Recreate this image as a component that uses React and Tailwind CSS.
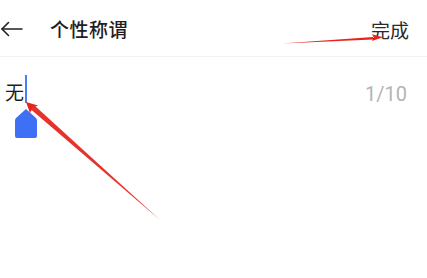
import React from 'react';

const BackArrow = () => (
  <svg width="24" height="16" viewBox="0 0 24 16" fill="none" stroke="#222" strokeWidth="1.6" strokeLinecap="round" strokeLinejoin="round">
    <path d="M22 8H2" />
    <path d="M8.5 1.5L2 8l6.5 6.5" />
  </svg>
);

const Annotations = () => (
  <svg className="absolute inset-0 pointer-events-none" width="427" height="278" viewBox="0 0 427 278">
    {/* arrow pointing at 完成 */}
    <polygon points="282,43.4 373,37 373,39.6" fill="#e8231d" />
    <polygon points="383,37.3 372,34.2 374,38 372,41" fill="#e8231d" />
    {/* arrow pointing at cursor */}
    <polygon points="160,220 34.5,105.5 31,109.5" fill="#e62620" opacity="0.95" />
    <polygon points="26,102 30,113 33,107.5 38,105.5" fill="#e8231d" />
  </svg>
);

export default function App() {
  return (
    <div
      className="relative w-[427px] h-[278px] bg-white overflow-hidden"
      style={{ fontFamily: '"Noto Sans CJK SC", "Noto Sans", Roboto, sans-serif' }}
    >
      <div className="flex items-center h-[57px] border-b border-[#f3f3f3]">
        <div className="w-[50px] flex items-center pl-[0px] pt-[1px]">
          <BackArrow />
        </div>
        <div className="text-[19px] font-medium text-[#1e1e1e] leading-none tracking-[0.5px]">个性称谓</div>
        <div className="ml-auto pr-[18px] pt-[3px] text-[19px] text-[#2a2a2a] leading-none">完成</div>
      </div>

      <div className="flex items-start justify-between pl-[5px] pr-[20px] pt-[18px]">
        <div className="relative flex items-start">
          <span className="text-[19px] text-[#1e1e1e] leading-none mt-[7px]">无</span>
          <span className="w-[2px] h-[28px] bg-[#4a7cf6] ml-[1px]" />
          <div className="absolute left-[9px] top-[33px]">
            <svg width="24" height="31" viewBox="0 0 24 31">
              <path d="M12 1 L22 10 Q23 11 23 13 V28 Q23 30 21 30 H3 Q1 30 1 28 V13 Q1 11 2 10 Z" fill="#3e6ff5" />
            </svg>
          </div>
        </div>
        <span
          className="text-[20px] text-[#b4b4b4] leading-none mt-[9px]"
          style={{ fontFamily: 'Roboto, "Noto Sans", sans-serif' }}
        >
          1/10
        </span>
      </div>

      <Annotations />
    </div>
  );
}
